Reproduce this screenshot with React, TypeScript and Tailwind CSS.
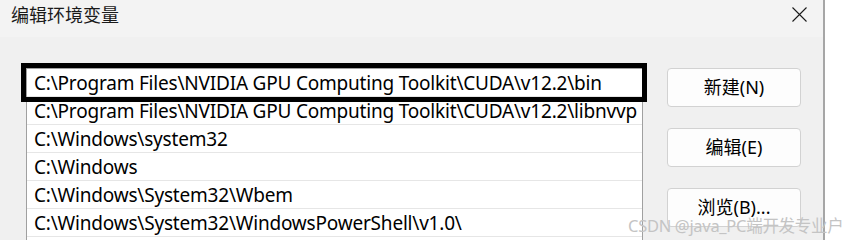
import React from "react";

const rows = [
  "C:\\Program Files\\NVIDIA GPU Computing Toolkit\\CUDA\\v12.2\\bin",
  "C:\\Program Files\\NVIDIA GPU Computing Toolkit\\CUDA\\v12.2\\libnvvp",
  "C:\\Windows\\system32",
  "C:\\Windows",
  "C:\\Windows\\System32\\Wbem",
  "C:\\Windows\\System32\\WindowsPowerShell\\v1.0\\",
  "",
];

const font = { fontFamily: '"Noto Sans", "Noto Sans CJK SC", sans-serif' };

export default function App() {
  return (
    <div
      className="relative flex h-[240px] w-[842px] overflow-hidden bg-white text-[#000]"
      style={font}
    >
      <div className="flex w-[823px] shrink-0 flex-col bg-[#f0f0f0]">
        <div className="flex h-[37px] shrink-0 items-start justify-between bg-[#f3f3f3]">
          <div className="pl-[11px] pt-[2px] text-[18px] leading-[26px] text-[#1a1a1a]">
            编辑环境变量
          </div>
          <svg width="15" height="15" viewBox="0 0 15 15" className="mr-[16px] mt-[7px]">
            <path d="M0.5 0.5 L14.5 14.5 M14.5 0.5 L0.5 14.5" stroke="#1a1a1a" strokeWidth="1.1" />
          </svg>
        </div>
        <div className="flex shrink-0 gap-[24px] pl-[26px] pt-[31px]">
          <div className="relative w-[617px] shrink-0 border border-[#a0a0a0] bg-white">
            {rows.map((r, i) => (
              <div
                key={i}
                className="flex h-[28px] items-center border-b border-[#e6e6e6] pl-[7px] text-[19px] whitespace-nowrap"
              >
                <span className="pt-[2px] tracking-[-0.2px]">{r}</span>
              </div>
            ))}
            <div className="absolute left-[-6px] top-[-6px] h-[39px] w-[626px] border-[5px] border-black" />
          </div>
          <div className="flex flex-col gap-[21px]">
            {["新建(N)", "编辑(E)", "浏览(B)..."].map((b) => (
              <div
                key={b}
                className="flex h-[39px] w-[134px] shrink-0 items-center justify-center rounded-[4px] border border-[#d2d2d2] bg-[#fdfdfd] text-[18px]"
              >
                {b}
              </div>
            ))}
          </div>
        </div>
      </div>
      <div className="w-[2px] shrink-0 bg-[#a6a6a6]" />
      <div className="flex-1 bg-white" />
      <div className="absolute left-[628px] top-[216px] z-10 text-[16.5px] leading-[20px] tracking-[-0.3px] whitespace-nowrap text-[#c4c4c4]">
        CSDN @java_PC端开发专业户
      </div>
    </div>
  );
}
